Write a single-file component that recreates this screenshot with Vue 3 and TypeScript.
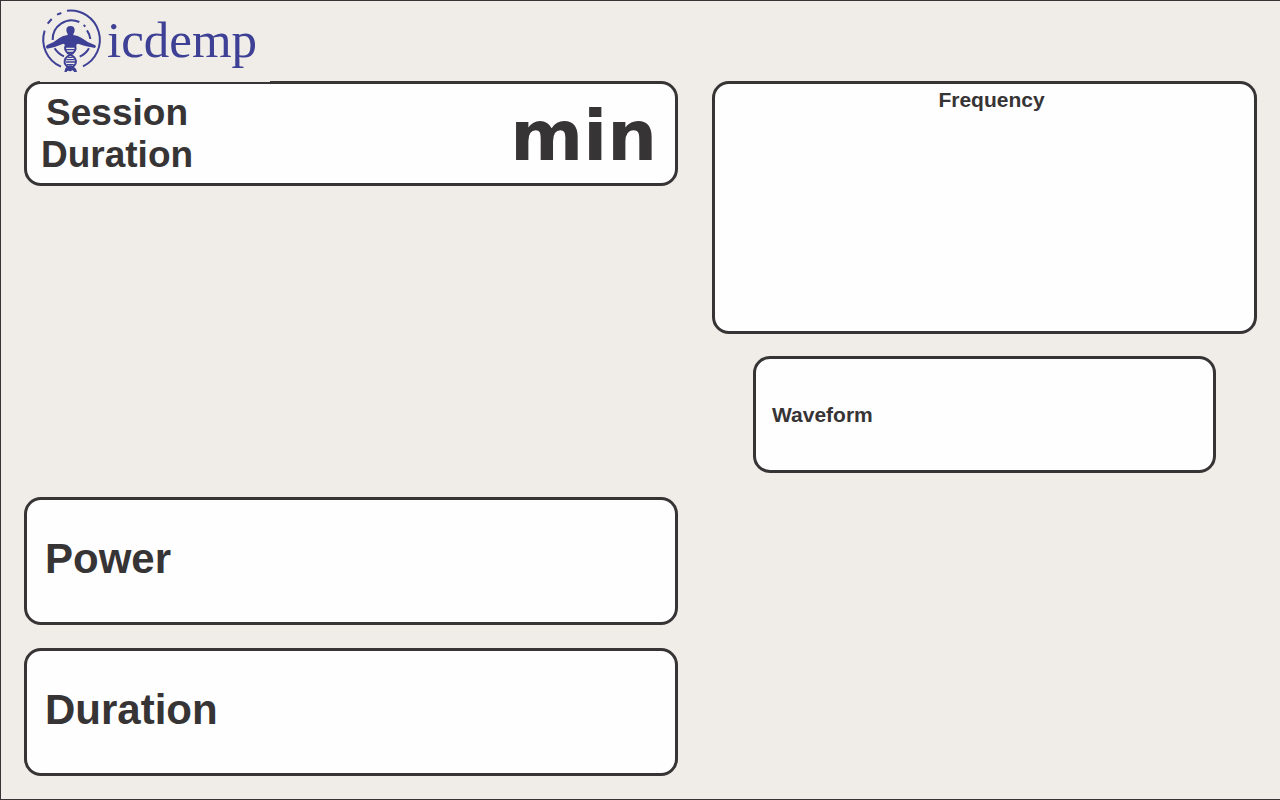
<script setup lang="ts">
const settings: string[] = ['Power', 'Duration']
</script>

<template>
  <main class="screen">
    <header class="brand">
      <svg class="mark" viewBox="0 0 216 216" aria-hidden="true">
        <g fill="none" stroke="currentColor" stroke-width="6">
          <path d="M93 20A88 88 0 0 1 141 187" />
          <path d="M26 80A88 88 0 0 0 75 188" />
          <path d="M35 59L47 45M63 32L76 27" />
          <path d="M50 108A57 57 0 0 1 130 54" />
          <path d="M143 63L148 68" />
          <path d="M153 79A57 57 0 0 1 163 105" />
          <path d="M56 133A57 57 0 0 0 84 157" />
          <path d="M131 158A57 57 0 0 0 159 133" />
        </g>
        <g fill="currentColor">
          <path d="M91 77Q92 66 103 66Q116 66 116 78Q116 86 112 90L112 93Q126 95 137 102Q153 115 178 124Q182 128 177 132Q149 128 126 119Q119 121 120 131L86 131Q89 121 82 119Q60 129 33 134Q27 130 32 124Q54 116 70 102Q80 95 95 93L95 90Q91 85 91 77Z" />
          <path d="M88 193Q91 190 95 187Q103 180 113 188Q121 192 123 204L115 204Q111 199 108 198Q107 204 99 201Q94 199 92 204L85 204Z" />
        </g>
        <g fill="none" stroke="currentColor" stroke-width="6">
          <path d="M88 126Q84 143 103 152Q123 162 119 178Q116 188 101 193" />
          <path d="M118 126Q122 143 103 152Q83 162 86 177Q89 187 105 193" />
          <path stroke-width="4" d="M90 137H116M96 145H111M96 160H110M91 167H115M89 174H117M93 182H113" />
        </g>
      </svg>
      <span class="name">icdemp</span>
    </header>

    <div class="columns">
      <section class="column">
        <div class="panel session">
          <h1 class="heading">Session<br>Duration</h1>
          <span class="unit">min</span>
        </div>
        <div class="settings">
          <div v-for="label in settings" :key="label" class="panel setting">
            <h2 class="label">{{ label }}</h2>
          </div>
        </div>
      </section>

      <section class="column">
        <div class="panel frequency">
          <h2 class="caption">Frequency</h2>
        </div>
        <div class="panel waveform">
          <h2 class="caption">Waveform</h2>
        </div>
      </section>
    </div>
  </main>
</template>

<style>
body {
  margin: 0;
  background: #f0ede8;
}
</style>

<style scoped>
.screen {
  box-sizing: border-box;
  min-height: 100vh;
  display: flex;
  flex-direction: column;
  padding: 3px 23px 23px;
  border: 1px solid #373435;
  border-right: 0;
  background: #f0ede8;
  color: #373435;
  font-family: "Liberation Sans", Arial, sans-serif;
}

/* The brand strip overlaps the top edge of the first panel. */
.brand {
  position: relative;
  z-index: 1;
  align-self: flex-start;
  display: flex;
  box-sizing: border-box;
  width: 230px;
  height: 78px;
  margin: 0 0 -1px 16px;
  background: #f0ede8;
  color: #3e4095;
}

.mark {
  flex: none;
  width: 72px;
  height: 72px;
  margin-left: -4px;
}

.name {
  margin-left: -1px;
  font: 51px/72px "Liberation Serif", "Times New Roman", serif;
}

.columns {
  flex: 1;
  display: grid;
  grid-template-columns: 654fr 545fr;
  gap: 34px;
}

.column {
  display: flex;
  flex-direction: column;
}

.panel {
  box-sizing: border-box;
  border: 3px solid #373435;
  border-radius: 17px;
  background: #fefefe;
}

.session {
  display: flex;
  align-items: center;
  justify-content: space-between;
  min-height: 105px;
  padding: 0 18px 0 14px;
}

.heading {
  margin: 0;
  font-size: 37px;
  line-height: 42px;
  text-align: center;
}

.unit {
  padding-top: 4px;
  font: bold 70px/84px "DejaVu Sans", Verdana, sans-serif;
}

.settings {
  display: flex;
  flex-direction: column;
  gap: 23px;
  margin-top: auto;
}

.setting {
  display: flex;
  align-items: center;
  min-height: 128px;
  padding: 0 18px 5px;
}

.label {
  margin: 0;
  font-size: 42px;
  line-height: 48px;
}

.frequency {
  min-height: 253px;
  padding: 4px 8px 4px 22px;
  text-align: center;
}

.waveform {
  display: flex;
  align-items: center;
  min-height: 117px;
  margin: 22px 41px 0;
  padding: 0 16px;
}

.caption {
  margin: 0;
  font-size: 21px;
  line-height: 24px;
}
</style>
